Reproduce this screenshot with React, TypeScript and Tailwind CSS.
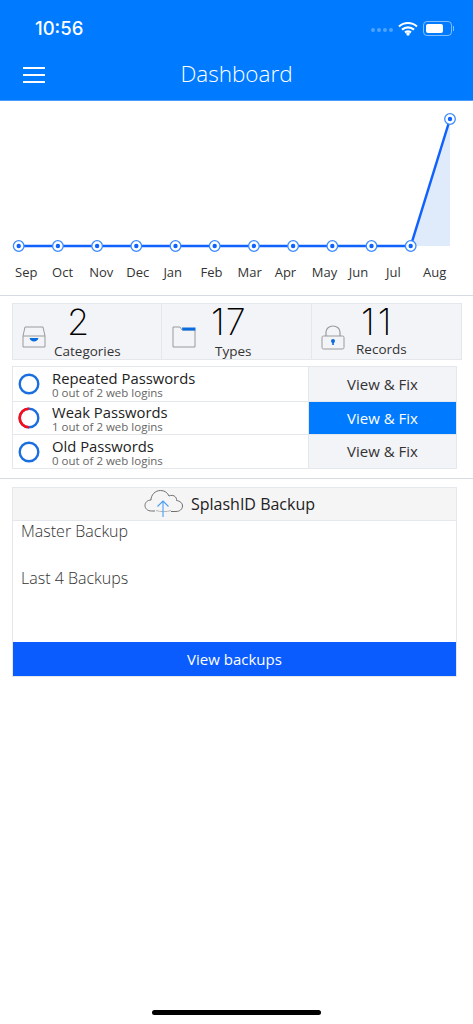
import { Fragment } from 'react'

const MONTHS = ['Sep', 'Oct', 'Nov', 'Dec', 'Jan', 'Feb', 'Mar', 'Apr', 'May', 'Jun', 'Jul', 'Aug']

const POINTS = MONTHS.map((_, i) => (i === 11 ? { x: 450, y: 18 } : { x: 18.7 + i * 39.2, y: 145 }))

const CHECKS = [
  { title: 'Repeated Passwords', sub: '0 out of 2 web logins', weak: false },
  { title: 'Weak Passwords', sub: '1 out of 2 web logins', weak: true },
  { title: 'Old Passwords', sub: '0 out of 2 web logins', weak: false },
]

function Chart() {
  const line = POINTS.map(p => `${p.x},${p.y}`).join(' ')
  return (
    <svg width="473" height="160" viewBox="0 0 473 160" className="block">
      <polygon points="411,145 450,18 450,145" fill="#dfeafb" />
      <polyline points={line} fill="none" stroke="#0f62fe" strokeWidth="2.500" />
      {POINTS.map(p => (
        <Fragment key={p.x}>
          <circle cx={p.x} cy={p.y} r="5.300" fill="#fff" stroke="#3d8bfd" strokeWidth="1.300" />
          <circle cx={p.x} cy={p.y} r="2.200" fill="#0f62fe" />
        </Fragment>
      ))}
    </svg>
  )
}

function TrayIcon() {
  return (
    <svg width="24" height="22" viewBox="0 0 24 22" fill="none">
      <path d="M3 1h18l2 9v11H1V10z" fill="#f3f4f8" stroke="#9a9a9a" />
      <path d="M1 10h22" stroke="#9a9a9a" />
      <path d="M7.500 12h9c-.6 2.300-2.300 3.500-4.500 3.500S8.100 14.300 7.500 12z" fill="#0a6cdc" />
    </svg>
  )
}

function FolderIcon() {
  return (
    <svg width="24" height="22" viewBox="0 0 24 22" fill="none">
      <path d="M1 1h7l2 3h13v17H1z" fill="#f3f4f8" stroke="#9a9a9a" />
      <path d="M10 1.500h13.500v3H10.500z" fill="#0a6cdc" />
    </svg>
  )
}

function LockIcon() {
  return (
    <svg width="24" height="25" viewBox="0 0 24 25" fill="none">
      <path d="M5 11V7a7 6 0 0 1 14 0v4" stroke="#9a9a9a" strokeWidth="1.200" />
      <rect x="1" y="11" width="22" height="13" rx="1.500" fill="#f3f4f8" stroke="#9a9a9a" />
      <circle cx="12" cy="16" r="2" fill="#0a6cdc" />
      <rect x="11.200" y="16" width="1.600" height="4" fill="#0a6cdc" />
    </svg>
  )
}

function Ring({ weak }: { weak: boolean }) {
  return (
    <svg width="22" height="22" viewBox="0 0 22 22" fill="none">
      <circle cx="11" cy="11" r="9.300" stroke="#1a6fe0" strokeWidth="2.400" />
      {weak && <path d="M11 1.700a9.300 9.300 0 0 0 0 18.600" stroke="#ff0a14" strokeWidth="2.600" />}
    </svg>
  )
}

function CloudIcon() {
  return (
    <svg width="40" height="29" viewBox="0 0 40 29" fill="none">
      <path
        d="M11 22H7.500C3.500 22 1 19.500 1 16.500S3.500 11 7 11c0-5 4-9.500 9.500-9.500 4 0 7 2 8.500 5.500 1.500-1 5-1 6.500 1 1 1.200 1.200 2.500 1 3.500 3.500.5 6 2.500 6 5.500 0 3.300-3 5.500-6.500 5.500H27"
        stroke="#6f6f6f"
        strokeWidth="1"
      />
      <path d="M12 21.500c4 1.500 11 1.500 15 0" stroke="#b5b5b5" strokeWidth="1" />
      <path d="M19 28V12M13.500 17.500 19 12l5.500 5.500" stroke="#4a9df5" strokeWidth="1.100" />
    </svg>
  )
}

export default function App() {
  return (
    <div className="w-[473px] h-[1024px] bg-white relative overflow-hidden font-['Open_Sans',sans-serif]">
      <header className="h-[101px] bg-[#007aff] border-b border-[#4a9dfa] text-white">
        <div className="h-[56px] pl-[35px] pr-[19px] flex items-center justify-between">
          <span className="font-['Inter',sans-serif] text-[18.500px] font-medium mt-[1px]">10:56</span>
          <div className="flex items-center">
            <div className="flex gap-[2px] mr-[5px] mt-[3px]">
              <span className="w-[4px] h-[4px] rounded-full bg-white/30" />
              <span className="w-[4px] h-[4px] rounded-full bg-white/30" />
              <span className="w-[4px] h-[4px] rounded-full bg-white/30" />
              <span className="w-[4px] h-[4px] rounded-full bg-white/30" />
            </div>
            <svg width="20" height="15" viewBox="0 0 20 15" fill="none" className="mr-[5px]">
              <path d="M1 5.500C6 .8 14 .8 19 5.500M4 8.700c3.500-3 8.500-3 12 0M7 11.500c1.800-1.300 4.200-1.300 6 0" stroke="#fff" strokeWidth="2.200" />
              <circle cx="10" cy="13" r="1.700" fill="#fff" />
            </svg>
            <div className="w-[29px] h-[15px] rounded-[4px] border border-white/50 p-[2px]">
              <div className="w-[17px] h-full rounded-[2px] bg-white" />
            </div>
            <div className="w-[1px] h-[5px] ml-[1px] bg-white/50" />
          </div>
        </div>
        <div className="h-[37px] flex items-center relative">
          <div className="absolute left-[23px] top-[11px] w-[22px] flex flex-col gap-[5px]">
            <span className="h-[2px] bg-white" />
            <span className="h-[2px] bg-white" />
            <span className="h-[2px] bg-white" />
          </div>
          <h1 className="w-full text-center text-[22.500px] font-light -mt-[1px]">Dashboard</h1>
        </div>
      </header>

      <section className="h-[195px] border-b border-[#d5dbe3]">
        <Chart />
        <div className="flex pl-[15px] mt-[1px]">
          {MONTHS.map(m => (
            <span key={m} className="w-[37.100px] text-[13px] leading-[20px] text-[#333]">{m}</span>
          ))}
        </div>
      </section>

      <div className="ml-[12px] mt-[7px] w-[450px] h-[57px] flex bg-[#f3f4f8] border border-[#e4e7ec]">
        <div className="w-[149px] border-r border-[#e4e7ec] flex pl-[9px] pt-[22px]">
          <TrayIcon />
          <div className="ml-[8px] -mt-[22px] w-[100px] flex flex-col">
            <span className="ml-[13px] text-[36px] leading-[36px] font-extralight text-black font-['Inter',sans-serif]">2</span>
            <span className="mt-[2px] text-[13.500px] leading-[18px] text-[#333]">Categories</span>
          </div>
        </div>
        <div className="w-[150px] border-r border-[#e4e7ec] flex pl-[10px] pt-[22px]">
          <FolderIcon />
          <div className="ml-[15px] -mt-[22px] flex flex-col">
            <span className="text-[36px] leading-[36px] font-extralight text-black font-['Inter',sans-serif] tracking-[1px]">17</span>
            <span className="mt-[2px] ml-[4px] text-[13.500px] leading-[18px] text-[#333]">Types</span>
          </div>
        </div>
        <div className="flex-1 flex pl-[9px] pt-[21px]">
          <LockIcon />
          <div className="ml-[11px] -mt-[21px] flex flex-col">
            <span className="ml-[5px] text-[36px] leading-[36px] font-extralight text-black font-['Inter',sans-serif] tracking-[3px]">11</span>
            <span className="text-[13.500px] leading-[18px] text-[#333]">Records</span>
          </div>
        </div>
      </div>

      <div className="ml-[12px] mt-[6px] w-[445px] border border-[#e4e7ec]">
        {CHECKS.map((c, i) => (
          <div key={c.title} className={`h-[33.670px] flex ${i > 0 ? 'border-t border-[#e4e7ec]' : ''}`}>
            <div className="w-[296px] flex items-center pl-[5px] border-r border-[#e4e7ec]">
              <Ring weak={c.weak} />
              <div className="ml-[12px] flex flex-col">
                <span className="text-[14.800px] leading-[17px] text-[#222]">{c.title}</span>
                <span className="text-[11.500px] leading-[11px] text-[#666]">{c.sub}</span>
              </div>
            </div>
            <button className={`flex-1 text-[15px] ${c.weak ? 'bg-[#007aff] text-white' : 'bg-[#f3f4f8] text-[#333]'}`}>
              View &amp; Fix
            </button>
          </div>
        ))}
      </div>

      <div className="mt-[9px] border-t border-[#d5dbe3]" />

      <section className="ml-[12px] mt-[8px] w-[445px] h-[190px] border border-[#e4e7ec] flex flex-col">
        <div className="h-[33px] flex items-center justify-center bg-[#f5f5f6] border-b border-[#e4e7ec] text-[16px] text-[#222]">
          <CloudIcon />
          <span className="ml-[7px] mr-[10px]">SplashID Backup</span>
        </div>
        <div className="flex-1 pl-[8px] -mt-[1px] text-[16px] font-light text-[#333]">
          <p className="leading-[22px]">Master Backup</p>
          <p className="mt-[25px] leading-[22px]">Last 4 Backups</p>
        </div>
        <button className="h-[34px] bg-[#0a5cff] text-white text-[15px]">View backups</button>
      </section>

      <div className="absolute left-[152px] bottom-[9px] w-[169px] h-[5px] rounded-full bg-black" />
    </div>
  )
}
